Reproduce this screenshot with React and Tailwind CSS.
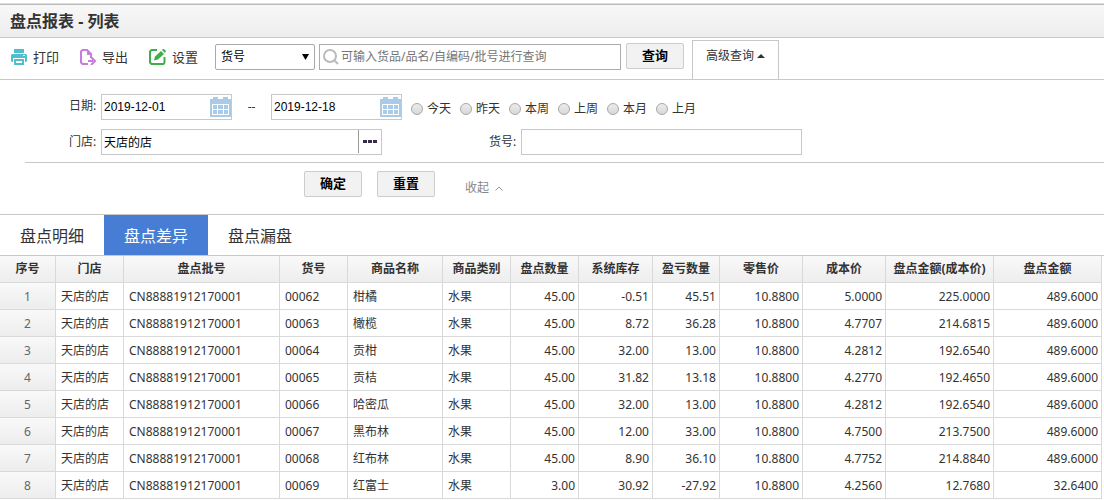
import { useState } from 'react';

const columns = [
  { key: 'no', label: '序号', width: 'w-[56px]' },
  { key: 'shop', label: '门店', width: 'w-[68px]' },
  { key: 'batch', label: '盘点批号', width: 'w-[156px]' },
  { key: 'code', label: '货号', width: 'w-[68px]' },
  { key: 'name', label: '商品名称', width: 'w-[95px]' },
  { key: 'category', label: '商品类别', width: 'w-[68px]' },
  { key: 'counted', label: '盘点数量', width: 'w-[68px]', numeric: true },
  { key: 'stock', label: '系统库存', width: 'w-[74px]', numeric: true },
  { key: 'diff', label: '盈亏数量', width: 'w-[67px]', numeric: true },
  { key: 'price', label: '零售价', width: 'w-[83px]', numeric: true },
  { key: 'cost', label: '成本价', width: 'w-[83px]', numeric: true },
  { key: 'costTotal', label: '盘点金额(成本价)', width: 'w-[108px]', numeric: true },
  { key: 'total', label: '盘点金额', width: 'w-[108px]', numeric: true },
];

const rows = [
  ['00062', '柑橘', '45.00', '-0.51', '45.51', '5.0000', '225.0000', '489.6000'],
  ['00063', '橄榄', '45.00', '8.72', '36.28', '4.7707', '214.6815', '489.6000'],
  ['00064', '贡柑', '45.00', '32.00', '13.00', '4.2812', '192.6540', '489.6000'],
  ['00065', '贡桔', '45.00', '31.82', '13.18', '4.2770', '192.4650', '489.6000'],
  ['00066', '哈密瓜', '45.00', '32.00', '13.00', '4.2812', '192.6540', '489.6000'],
  ['00067', '黑布林', '45.00', '12.00', '33.00', '4.7500', '213.7500', '489.6000'],
  ['00068', '红布林', '45.00', '8.90', '36.10', '4.7752', '214.8840', '489.6000'],
  ['00069', '红富士', '3.00', '30.92', '-27.92', '4.2560', '12.7680', '32.6400'],
].map(([code, name, counted, stock, diff, cost, costTotal, total], i) => ({
  no: i + 1,
  shop: '天店的店',
  batch: 'CN88881912170001',
  code,
  name,
  category: '水果',
  counted,
  stock,
  diff,
  price: '10.8800',
  cost,
  costTotal,
  total,
}));

const ranges = ['今天', '昨天', '本周', '上周', '本月', '上月'];
const tabs = ['盘点明细', '盘点差异', '盘点漏盘'];

const PrintIcon = () => (
  <svg width="16" height="16" viewBox="0 0 16 16" fill="#4fbfcd">
    <path d="M3 0h10v4H3z" />
    <path d="M1 5h14l1 1v6l-1 1h-1V9H2v4H1l-1-1V6z" />
    <path d="M3 10h10v6H3zM5 12v2h6v-2z" fillRule="evenodd" />
    <path d="M12 6h2v1h-2z" fill="#fff" />
  </svg>
);

const ExportIcon = () => (
  <svg width="16" height="16" viewBox="0 0 16 16" fill="none" stroke="#c77ddd" strokeWidth="2">
    <path d="M8 15H2.500L1 13.500v-11L2.500 1H7l4 4v4" />
    <path d="M7 0l5 6H7z" fill="#c77ddd" stroke="none" />
    <path d="M8 12h5" />
    <path d="M11 8l4 4-4 4" />
  </svg>
);

const SettingIcon = () => (
  <svg width="17" height="16" viewBox="0 0 17 16" fill="none" stroke="#3fae49" strokeWidth="2">
    <path d="M8 1H2.500L1 2.500v11L2.500 15h12l1-1.500V8" />
    <path d="M5 11.500l1-4L12 2l3 3-6 5.500z" fill="#3fae49" stroke="none" />
    <path d="M13 1l1-1h1l2 2-1 2z" fill="#3fae49" stroke="none" />
  </svg>
);

const CalendarIcon = () => (
  <svg width="21" height="20" viewBox="0 0 21 20" fill="#a9cbe8">
    <path d="M0 2h3V0h5v2h5V0h5v2h3v18H0z" />
    <path d="M2 7h17v11H2z" fill="#fff" />
    <path d="M3 8h4v4H3zM8 8h5v4H8zM14 8h4v4h-4zM3 13h4v4H3zM8 13h5v4H8zM14 13h4v4h-4z" />
  </svg>
);

const ToolButton = ({ icon, children }) => (
  <button type="button" className="flex items-center gap-[6px] text-[13px] leading-5">
    {icon}
    {children}
  </button>
);

const Button = ({ children }) => (
  <button
    type="button"
    className="h-[26px] w-[58px] rounded-xs border border-[#ccc] bg-[#f2f2f2] pb-[2px] text-[13px] leading-5 font-bold text-black"
  >
    {children}
  </button>
);

const DateField = ({ id, label, defaultValue }) => (
  <div className="flex h-[26px] w-[131px] items-center border border-[#c8c8c8]">
    <input
      id={id}
      aria-label={label}
      defaultValue={defaultValue}
      className="min-w-0 flex-1 pl-[2px] [font-family:'Liberation_Sans','Noto_Sans_CJK_SC',sans-serif] text-black outline-none"
    />
    <button type="button" aria-label="选择日期">
      <CalendarIcon />
    </button>
  </div>
);

const Toolbar = ({ open, onToggle }) => (
  <div className="flex h-[42px] items-start border-b border-[#c8c8c8] pl-[11px]">
    <div className="flex h-[37px] items-center gap-[21px]">
      <ToolButton icon={<PrintIcon />}>打印</ToolButton>
      <ToolButton icon={<ExportIcon />}>导出</ToolButton>
      <ToolButton icon={<SettingIcon />}>设置</ToolButton>
    </div>
    <div className="relative mt-[6px] ml-[17px]">
      <select
        aria-label="查询字段"
        className="h-[26px] w-[100px] appearance-none rounded-xs border border-[#a9a9a9] bg-white pl-[5px] text-black"
      >
        <option>货号</option>
        <option>商品名称</option>
      </select>
      <svg className="pointer-events-none absolute top-[10px] right-[6px]" width="7" height="6" viewBox="0 0 7 6">
        <path d="M0 0h7L3.500 6z" />
      </svg>
    </div>
    <div className="mt-[6px] ml-1 flex h-[26px] w-[302px] items-center gap-[2px] border border-[#adadad] pl-[3px]">
      <svg width="16" height="16" viewBox="0 0 16 16" fill="none" stroke="#bbb" strokeWidth="2">
        <circle cx="7" cy="7" r="6" />
        <path d="M11 11l4 4" />
      </svg>
      <input
        aria-label="查询"
        placeholder="可输入货品/品名/自编码/批号进行查询"
        className="min-w-0 flex-1 outline-none placeholder:text-[#757575]"
      />
    </div>
    <div className="mt-[5px] ml-[5px]">
      <Button>查询</Button>
    </div>
    <button
      type="button"
      onClick={onToggle}
      aria-expanded={open}
      className="mt-[2px] ml-2 flex h-10 w-[87px] items-center justify-center gap-[3px] border border-b-0 border-[#c8c8c8] pb-[9px]"
    >
      高级查询
      <svg width="8" height="4" viewBox="0 0 8 4" fill="#333">
        <path d="M0 4h8L4 0z" />
      </svg>
    </button>
  </div>
);

const SearchPanel = ({ onClose }) => (
  <form className="border-b border-[#c8c8c8] pt-[14px]">
    <div className="flex flex-col gap-[9px] pb-[7px] pl-[69px]">
      <div className="flex items-center">
        <label htmlFor="from" className="w-8 pb-[2px]">
          日期:
        </label>
        <DateField id="from" defaultValue="2019-12-01" />
        <span className="w-[39px] text-center">--</span>
        <DateField id="to" label="结束日期" defaultValue="2019-12-18" />
        <div className="flex gap-[9px] pt-1 pl-[9px]">
          {ranges.map((range) => (
            <label key={range} className="flex items-center gap-1">
              <input
                type="radio"
                name="range"
                className="size-3 appearance-none rounded-full border border-[#a8a8a8] bg-linear-to-b from-[#ececec] to-[#d8d8d8] checked:border-4 checked:border-[#477dd5]"
              />
              {range}
            </label>
          ))}
        </div>
      </div>
      <div className="flex items-center">
        <label htmlFor="shop" className="w-8">
          门店:
        </label>
        <div className="flex h-[26px] w-[281px] border border-[#c8c8c8]">
          <input id="shop" defaultValue="天店的店" className="min-w-0 flex-1 pt-px pl-[2px] text-black outline-none" />
          <button
            type="button"
            aria-label="选择门店"
            className="mb-px flex w-[23px] items-center justify-center border-l border-[#999]"
          >
            <svg width="14" height="3" viewBox="0 0 14 3" fill="#3a2b48">
              <path d="M0 0h4v3H0zM5 0h4v3H5zM10 0h4v3h-4z" />
            </svg>
          </button>
        </div>
        <label htmlFor="code" className="ml-[107px] w-8">
          货号:
        </label>
        <input id="code" className="h-[26px] w-[281px] border border-[#c8c8c8] outline-none" />
      </div>
    </div>
    <div className="ml-[25px] flex items-start border-t border-[#c8c8c8] pt-2 pb-[17px] pl-[279px]">
      <Button>确定</Button>
      <div className="ml-[15px]">
        <Button>重置</Button>
      </div>
      <button type="button" onClick={onClose} className="mt-2 ml-[30px] flex items-center gap-[6px] text-[#888]">
        收起
        <svg width="8" height="5" viewBox="0 0 8 5" fill="none" stroke="#999">
          <path d="M0.500 4.500L4 1l3.500 3.500" />
        </svg>
      </button>
    </div>
  </form>
);

const DataTable = () => (
  <div className="overflow-hidden pr-[2px]">
    <table className="w-full table-fixed border-separate border-spacing-0">
      <thead>
        <tr className="bg-linear-to-b from-[#f9f9f9] to-[#ededed]">
          {columns.map((col) => (
            <th
              key={col.key}
              className={`h-[27px] border-r border-b border-[#d9d9d9] p-0 font-bold whitespace-nowrap ${col.width}`}
            >
              {col.label}
            </th>
          ))}
        </tr>
      </thead>
      <tbody>
        {rows.map((row) => (
          <tr key={row.code}>
            {columns.map((col) => (
              <td
                key={col.key}
                className={`h-[27px] border-r border-b border-[#d9d9d9] pt-[2px] pb-0 whitespace-nowrap ${
                  col.key === 'no'
                    ? 'bg-linear-to-b from-[#f9f9f9] to-[#ededed] text-center text-[#666]'
                    : col.numeric
                      ? 'pr-[3px] text-right'
                      : 'pl-[5px]'
                }`}
              >
                {row[col.key]}
              </td>
            ))}
          </tr>
        ))}
      </tbody>
    </table>
  </div>
);

export default function App() {
  const [open, setOpen] = useState(true);
  const [active, setActive] = useState('盘点差异');

  return (
    <div className="bg-white pt-[3px] [font-family:'Noto_Sans','Noto_Sans_CJK_SC',sans-serif] text-[12px] leading-[18px] text-[#333]">
      <header className="border-t border-[#ddd]">
        <h1 className="flex h-[34px] items-center border-y border-t-[#bbb] border-b-[#c8c8c8] bg-linear-to-b from-[#f8f8f8] to-[#ededed] pl-[10px] text-[16px] leading-6 font-bold">
          盘点报表 - 列表
        </h1>
      </header>
      <Toolbar open={open} onToggle={() => setOpen(!open)} />
      {open && <SearchPanel onClose={() => setOpen(false)} />}
      <nav className="flex border-b border-[#c8c8c8]">
        {tabs.map((tab) => (
          <button
            key={tab}
            type="button"
            onClick={() => setActive(tab)}
            className={`h-10 w-[104px] pt-[2px] text-[16px] leading-6 ${active === tab ? 'bg-[#477dd5] text-white' : ''}`}
          >
            {tab}
          </button>
        ))}
      </nav>
      <DataTable />
    </div>
  );
}
